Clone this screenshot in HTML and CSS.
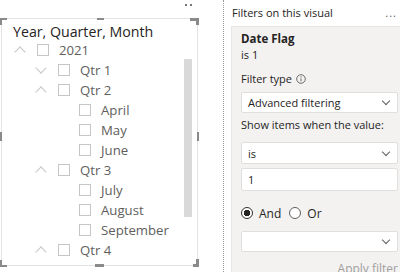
FILE: index.html
```html
<!DOCTYPE html>
<html lang="en">
<head>
    <meta charset="UTF-8">
    <title>Slicer and filters</title>
    <link rel="stylesheet" href="styles.css">
</head>
<body>
    <div class="page">
        <div class="visual-area">
            <div class="more-dots"><span></span><span></span></div>

            <div class="visual">
                <div class="handle h-tl"></div>
                <div class="handle h-tm"></div>
                <div class="handle h-tr"></div>
                <div class="handle h-ml"></div>
                <div class="handle h-mr"></div>
                <div class="handle h-bl"></div>
                <div class="handle h-bm"></div>
                <div class="handle h-br"></div>

                <div class="slicer-title">Year, Quarter, Month</div>

                <div class="tree">
                    <div class="row lvl0"><span class="chev up"></span><span class="box"></span><span class="label">2021</span></div>
                    <div class="row lvl1"><span class="chev down"></span><span class="box"></span><span class="label">Qtr 1</span></div>
                    <div class="row lvl1"><span class="chev up"></span><span class="box"></span><span class="label">Qtr 2</span></div>
                    <div class="row lvl2"><span class="chev"></span><span class="box"></span><span class="label">April</span></div>
                    <div class="row lvl2"><span class="chev"></span><span class="box"></span><span class="label">May</span></div>
                    <div class="row lvl2"><span class="chev"></span><span class="box"></span><span class="label">June</span></div>
                    <div class="row lvl1"><span class="chev up"></span><span class="box"></span><span class="label">Qtr 3</span></div>
                    <div class="row lvl2"><span class="chev"></span><span class="box"></span><span class="label">July</span></div>
                    <div class="row lvl2"><span class="chev"></span><span class="box"></span><span class="label">August</span></div>
                    <div class="row lvl2"><span class="chev"></span><span class="box"></span><span class="label">September</span></div>
                    <div class="row lvl1"><span class="chev up"></span><span class="box"></span><span class="label">Qtr 4</span></div>
                </div>

                <div class="scrollbar"></div>
            </div>
        </div>

        <div class="filters">
            <div class="filters-head">
                <span>Filters on this visual</span>
                <span class="ellipsis">...</span>
            </div>

            <div class="card">
                <div class="field-name">Date Flag</div>
                <div class="field-sub">is 1</div>

                <div class="label-line">Filter type
                    <svg class="info" width="10" height="10" viewBox="0 0 10 10">
                        <circle cx="5" cy="5" r="4.3" fill="none" stroke="#605e5c" stroke-width="0.9"/>
                        <line x1="5" y1="4.4" x2="5" y2="7.4" stroke="#605e5c" stroke-width="0.9"/>
                        <circle cx="5" cy="2.9" r="0.6" fill="#605e5c"/>
                    </svg>
                </div>
                <div class="select first"><span>Advanced filtering</span><span class="caret"></span></div>

                <div class="label-line show">Show items when the value:</div>
                <div class="select second"><span>is</span><span class="caret"></span></div>
                <div class="input">1</div>

                <div class="radios">
                    <span class="radio on"></span><span>And</span>
                    <span class="radio"></span><span>Or</span>
                </div>

                <div class="select third"><span></span><span class="caret"></span></div>

                <div class="apply">Apply filter</div>
            </div>
        </div>
    </div>
</body>
</html>
```

FILE: styles.css
```css
* {
    margin: 0;
    padding: 0;
    box-sizing: border-box;
}

body {
    background: #ffffff;
    font-family: "Open Sans", "Noto Sans", sans-serif;
    color: #252423;
    overflow: hidden;
}

.page {
    display: flex;
    height: 272px;
    width: 400px;
    overflow: hidden;
}

/* left: slicer visual */

.visual-area {
    position: relative;
    width: 223px;
    flex: none;
    padding: 18px 0 0 1px;
}

.more-dots {
    position: absolute;
    left: 185px;
    top: 4px;
    display: flex;
    gap: 3px;
}

.more-dots span {
    width: 2px;
    height: 2px;
    background: #777;
}

.visual {
    position: relative;
    width: 197px;
    height: 248px;
    border: 1px solid #e3e3e3;
    padding: 4px 0 0 11px;
}

.handle {
    position: absolute;
    background: #8a8a8a;
}

.h-tl { left: -2px; top: -1px; width: 7px; height: 2px; }
.h-tl::after, .h-tr::after, .h-bl::after, .h-br::after {
    content: "";
    position: absolute;
    width: 2px;
    height: 7px;
    background: #8a8a8a;
}
.h-tl::after { left: 0; top: 0; }
.h-tm { left: 95px; top: -1px; width: 7px; height: 2px; }
.h-tr { right: -2px; top: -1px; width: 9px; height: 3px; }
.h-tr::after { right: 0; top: 0; height: 7px; width: 3px; }
.h-ml { left: -2px; top: 113px; width: 2px; height: 9px; }
.h-mr { right: -2px; top: 113px; width: 2px; height: 9px; }
.h-bl { left: -2px; bottom: -2px; width: 7px; height: 2px; }
.h-bl::after { left: 0; bottom: 0; }
.h-bm { left: 93px; bottom: -2px; width: 9px; height: 3px; }
.h-br { right: -2px; bottom: -2px; width: 6px; height: 3px; }
.h-br::after { right: 0; bottom: 0; height: 8px; width: 3px; }

.slicer-title {
    font-size: 14.2px;
    line-height: 18px;
    color: #252423;
}

.tree {
    margin-top: -1px;
}

.row {
    display: flex;
    align-items: center;
    height: 20px;
    font-size: 13.2px;
    color: #605e5c;
}

.lvl1 { padding-left: 21px; }
.lvl2 { padding-left: 42px; }

.chev {
    position: relative;
    width: 24px;
    height: 20px;
    flex: none;
}

.chev.up::before, .chev.down::before {
    content: "";
    position: absolute;
    left: 3px;
    width: 7px;
    height: 7px;
    border-left: 1px solid #c8c6c4;
    border-top: 1px solid #c8c6c4;
}

.chev.up::before {
    top: 8px;
    transform: rotate(45deg);
}

.chev.down::before {
    top: 4px;
    transform: rotate(225deg);
}

.box {
    width: 12px;
    height: 12px;
    border: 1px solid #c8c6c4;
    margin-right: 10px;
    flex: none;
}

.scrollbar {
    position: absolute;
    left: 182px;
    top: 40px;
    width: 8px;
    height: 158px;
    background: #d9d9d9;
}

/* right: filters pane */

.filters {
    flex: 1;
    min-width: 0;
    border-left: 1px dotted #9a9a9a;
    padding-left: 7px;
    font-size: 11px;
}

.filters-head {
    display: flex;
    justify-content: space-between;
    height: 26px;
    padding: 5px 3px 0 1px;
    color: #252423;
}

.ellipsis {
    color: #605e5c;
    letter-spacing: 1px;
}

.card {
    width: 180px;
    height: 250px;
    background: #f3f2f1;
    border-top: 1px solid #e6e4e2;
    border-left: 1px solid #e9e7e5;
    padding: 4px 13px 0 9px;
}

.field-name {
    font-weight: 700;
    font-size: 11.5px;
    line-height: 16px;
    height: 16px;
}

.field-sub {
    line-height: 16px;
    height: 16px;
    color: #252423;
}

.label-line {
    display: flex;
    align-items: center;
    gap: 4px;
    line-height: 16px;
    height: 16px;
    margin-top: 8px;
}

.label-line.show { margin-top: 4px; }

.select, .input {
    display: flex;
    align-items: center;
    justify-content: space-between;
    height: 21px;
    background: #ffffff;
    border: 1px solid #e1dfdd;
    border-radius: 2px;
    padding: 0 6px 0 6px;
    margin-top: 5px;
}

.select.second { margin-top: 9px; height: 22px; }
.input { margin-top: 4px; height: 23px; }
.select.third { margin-top: 10px; }

.caret {
    width: 6px;
    height: 6px;
    border-right: 1px solid #605e5c;
    border-bottom: 1px solid #605e5c;
    transform: rotate(45deg);
    margin: -3px 2px 0 0;
}

.radios {
    display: flex;
    align-items: center;
    height: 16px;
    margin-top: 14px;
    gap: 6px;
    font-size: 12px;
}

.radio {
    width: 12px;
    height: 12px;
    border: 1px solid #605e5c;
    border-radius: 50%;
    background: #ffffff;
}

.radio.on {
    border-color: #323130;
    background: radial-gradient(circle, #252423 0 3px, #ffffff 3.5px);
}

.radios span:nth-child(3) { margin-left: 2px; }

.apply {
    text-align: right;
    color: #a19f9d;
    font-size: 12px;
    margin-top: 8px;
}
```
